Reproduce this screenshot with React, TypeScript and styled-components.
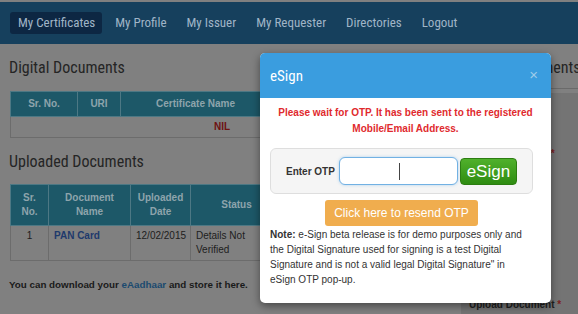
import React from "react";
import styled, { createGlobalStyle } from "styled-components";

const narrow = `"Roboto Condensed", "DejaVu Sans Condensed", sans-serif`;
const arial = `"Liberation Sans", Arial, sans-serif`;

const GlobalStyle = createGlobalStyle`
    html, body {
        margin: 0;
        padding: 0;
    }
    body {
        width: 578px;
        height: 314px;
        overflow: hidden;
        background: #808080;
        font-family: ${arial};
    }
`;

const Page = styled.div`
    position: relative;
    width: 578px;
    height: 314px;
    padding-top: 2px;
    box-sizing: border-box;
    overflow: hidden;
`;

const NavBar = styled.nav`
    height: 42px;
    background: #16405d;
    display: flex;
    align-items: center;
    gap: 5px;
    padding-left: 10px;
`;

const NavItem = styled.a<{ $active?: boolean }>`
    font-family: ${narrow};
    font-size: 13px;
    line-height: 16px;
    color: #a0b5c7;
    padding: 3px 7px 3px 8px;
    border-radius: 3px;
    background: ${p => (p.$active ? "#0d2743" : "transparent")};
    text-decoration: none;
    white-space: nowrap;
`;

const Main = styled.div`
    display: flex;
    gap: 27px;
    padding-left: 10px;
`;

const LeftColumn = styled.div`
    width: 424px;
    flex-shrink: 0;
`;

const RightColumn = styled.div`
    width: 130px;
    flex-shrink: 0;
`;

const Heading = styled.h2<{ $top: number }>`
    font-family: ${narrow};
    font-weight: normal;
    font-size: 16px;
    line-height: 24px;
    color: #252525;
    margin: ${p => p.$top}px 0 0 -1px;
    white-space: nowrap;
`;

const Table = styled.table<{ $top: number }>`
    width: 424px;
    border-collapse: collapse;
    margin-top: ${p => p.$top}px;
    table-layout: fixed;
`;

const Th = styled.th<{ $h: number }>`
    height: ${p => p.$h}px;
    background: #1d5868;
    color: #8ea4ac;
    font: bold 10px/14px ${arial};
    border: 1px solid #4d7884;
    padding: 0 3px;
`;

const Td = styled.td<{ $align?: string; $h: number }>`
    height: ${p => p.$h}px;
    border: 1px solid #6c6c6c;
    font: 10px/14px ${arial};
    color: #1d1d1d;
    text-align: ${p => p.$align || "left"};
    vertical-align: top;
    padding: 3px 5px;
    box-sizing: border-box;
`;

const Nil = styled.span`
    color: #6e1212;
    font-weight: bold;
`;

const DocLink = styled.a`
    color: #1e3a6c;
    font-weight: bold;
    text-decoration: none;
`;

const Footnote = styled.p`
    font: bold 9.8px/14px ${arial};
    color: #1a1a1a;
    margin: 17px 0 0 -1px;
    white-space: nowrap;
`;

const InlineLink = styled.a`
    color: #1b4a6f;
    text-decoration: none;
`;

const RightHeading = styled(Heading)`
    padding-bottom: 8px;
    border-bottom: 1px solid #6a6a6a;
    margin-left: 0;
`;

const FormPanel = styled.div`
    margin-top: 4px;
    background: #747474;
    padding: 23px 8px 0;
    height: 230px;
`;

const FieldLabel = styled.div<{ $gap: number }>`
    font: bold 10px/14px ${arial};
    color: #1f1f1f;
    margin-bottom: ${p => p.$gap}px;
    white-space: nowrap;
`;

const Req = styled.span`
    color: #7a1f1f;
`;

/* modal */

const Modal = styled.div`
    position: absolute;
    left: 260px;
    top: 53px;
    width: 291px;
    height: 250px;
    background: #ffffff;
    border-radius: 5px;
    box-shadow: 0 3px 9px rgba(0, 0, 0, 0.45);
    overflow: hidden;
`;

const ModalHeader = styled.div`
    height: 45px;
    background: #3a9ddf;
    display: flex;
    align-items: center;
    justify-content: space-between;
    padding: 0 13px 0 10px;
`;

const ModalTitle = styled.h4`
    margin: 0;
    font-family: ${narrow};
    font-weight: normal;
    font-size: 15px;
    color: #ffffff;
`;

const Close = styled.span`
    font: 15px/1 ${arial};
    color: #9fcbe9;
    margin-top: -2px;
`;

const ModalBody = styled.div`
    padding: 7px 10px 0;
`;

const Alert = styled.p`
    margin: 0;
    font: bold 10px/16px ${arial};
    color: #df2a2e;
    text-align: center;
`;

const Well = styled.div`
    width: 263px;
    height: 46px;
    margin-top: 11px;
    background: #f5f5f5;
    border: 1px solid #dedede;
    border-radius: 6px;
    box-sizing: border-box;
    display: flex;
    align-items: center;
    padding-left: 15px;
`;

const OtpLabel = styled.label`
    font: bold 10px ${arial};
    color: #333;
    margin-right: 4px;
`;

const InputWrap = styled.div`
    position: relative;
    width: 119px;
    height: 28px;
`;

const OtpInput = styled.input`
    width: 100%;
    height: 100%;
    box-sizing: border-box;
    border: 1px solid #72b1e3;
    border-radius: 6px;
    background: #fff;
    outline: none;
    box-shadow: 0 0 3px rgba(102, 175, 233, 0.5);
`;

const Caret = styled.span`
    position: absolute;
    left: 60px;
    top: 6px;
    width: 1px;
    height: 17px;
    background: #444;
`;

const SignButton = styled.button`
    margin-left: 2px;
    width: 57px;
    height: 27px;
    border: 1px solid #2c7d11;
    border-radius: 4px;
    background: linear-gradient(#50b12c, #2f8c12);
    color: #fff;
    font: 17px/1 ${arial};
    padding: 0;
`;

const ResendRow = styled.div`
    width: 263px;
    display: flex;
    justify-content: center;
    margin-top: 6px;
`;

const ResendButton = styled.button`
    width: 153px;
    height: 26px;
    border: none;
    border-radius: 3px;
    background: #f0ad4e;
    color: #fff;
    font: 12px/1 ${arial};
    padding: 0;
`;

const Note = styled.p`
    width: 262px;
    margin: 1px 0 0;
    font: 10px/15px ${arial};
    color: #333;
`;

export default function App() {
    const nav = ["My Certificates", "My Profile", "My Issuer", "My Requester", "Directories", "Logout"];
    return (
        <Page>
            <GlobalStyle />
            <NavBar>
                {nav.map((n, i) => (
                    <NavItem key={n} $active={i === 0}>
                        {n}
                    </NavItem>
                ))}
            </NavBar>

            <Main>
                <LeftColumn>
                    <Heading $top={12}>Digital Documents</Heading>
                    <Table $top={11}>
                        <colgroup>
                            <col style={{ width: 67 }} />
                            <col style={{ width: 43 }} />
                            <col style={{ width: 150 }} />
                            <col />
                        </colgroup>
                        <thead>
                            <tr>
                                <Th $h={24}>Sr. No.</Th>
                                <Th $h={24}>URI</Th>
                                <Th $h={24}>Certificate Name</Th>
                                <Th $h={24} />
                            </tr>
                        </thead>
                        <tbody>
                            <tr>
                                <Td $h={20} $align="center" colSpan={4}>
                                    <Nil>NIL</Nil>
                                </Td>
                            </tr>
                        </tbody>
                    </Table>

                    <Heading $top={12}>Uploaded Documents</Heading>
                    <Table $top={10}>
                        <colgroup>
                            <col style={{ width: 38 }} />
                            <col style={{ width: 82 }} />
                            <col style={{ width: 60 }} />
                            <col style={{ width: 92 }} />
                            <col />
                        </colgroup>
                        <thead>
                            <tr>
                                <Th $h={40}>Sr. No.</Th>
                                <Th $h={40}>Document Name</Th>
                                <Th $h={40}>Uploaded Date</Th>
                                <Th $h={40}>Status</Th>
                                <Th $h={40} />
                            </tr>
                        </thead>
                        <tbody>
                            <tr>
                                <Td $h={34} $align="center">1</Td>
                                <Td $h={34}>
                                    <DocLink>PAN Card</DocLink>
                                </Td>
                                <Td $h={34}>12/02/2015</Td>
                                <Td $h={34}>Details Not Verified</Td>
                                <Td $h={34} />
                            </tr>
                        </tbody>
                    </Table>

                    <Footnote>
                        You can download your <InlineLink>eAadhaar</InlineLink> and store it here.
                    </Footnote>
                </LeftColumn>

                <RightColumn>
                    <RightHeading $top={12}>Upload Documents</RightHeading>
                    <FormPanel>
                        <FieldLabel $gap={17}>
                            Document Type <Req>*</Req>
                        </FieldLabel>
                        <FieldLabel $gap={137}>
                            Document Name <Req>*</Req>
                        </FieldLabel>
                        <FieldLabel $gap={0}>
                            Upload Document <Req>*</Req>
                        </FieldLabel>
                        <FieldLabel $gap={0}>(Max. size 1MB) (JPG/PDF)</FieldLabel>
                    </FormPanel>
                </RightColumn>
            </Main>

            <Modal>
                <ModalHeader>
                    <ModalTitle>eSign</ModalTitle>
                    <Close>×</Close>
                </ModalHeader>
                <ModalBody>
                    <Alert>
                        Please wait for OTP. It has been sent to the registered
                        <br />
                        Mobile/Email Address.
                    </Alert>
                    <Well>
                        <OtpLabel>Enter OTP</OtpLabel>
                        <InputWrap>
                            <OtpInput type="text" />
                            <Caret />
                        </InputWrap>
                        <SignButton>eSign</SignButton>
                    </Well>
                    <ResendRow>
                        <ResendButton>Click here to resend OTP</ResendButton>
                    </ResendRow>
                    <Note>
                        <b>Note:</b> e-Sign beta release is for demo purposes only and the Digital Signature
                        used for signing is a test Digital Signature and is not a valid legal Digital
                        Signature" in eSign OTP pop-up.
                    </Note>
                </ModalBody>
            </Modal>
        </Page>
    );
}
